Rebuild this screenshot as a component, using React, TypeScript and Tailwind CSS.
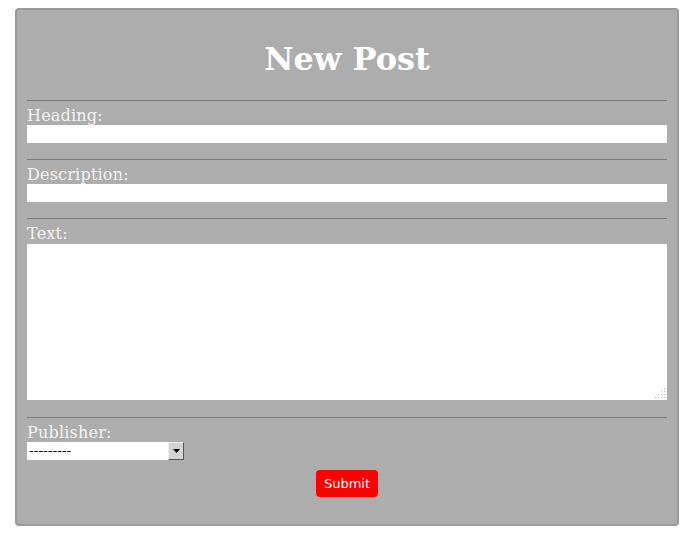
export default function App() {
  const fields = ["Heading:", "Description:"];

  return (
    <div className="min-h-[547px] bg-white pt-[8px] pl-[15px] pr-[18px]">
      <div className="w-[664px] h-[518px] rounded-[4px] border-2 border-[#9a9a9a] bg-[#adadad] px-[10px]">
        <h1 className="pt-[31px] pb-[23px] text-center text-[32px] leading-[36px] font-bold text-white [font-family:'DejaVu_Serif',serif]">
          New Post
        </h1>

        <form className="flex flex-col [font-family:'DejaVu_Serif',serif]">
          {fields.map((label) => (
            <div key={label} className="border-t border-[#7a7a7a] pb-[16px]">
              <label className="block h-[24px] pt-[5px] text-[16px] leading-[20px] tracking-[0.2px] text-[#f4f4f4]">
                {label}
              </label>
              <input type="text" className="block h-[18px] w-full border-0 bg-white outline-none" />
            </div>
          ))}

          <div className="border-t border-[#7a7a7a] pb-[17px]">
            <label className="block h-[25px] pt-[5px] text-[16px] leading-[20px] tracking-[0.2px] text-[#f4f4f4]">
              Text:
            </label>
            <div className="relative">
              <textarea className="block h-[156px] w-full resize-none border-0 bg-white outline-none" />
              <svg className="absolute bottom-[1px] right-[1px]" width="11" height="11" viewBox="0 0 11 11">
                <g fill="#b8b8b8">
                  <rect x="9" y="0" width="1" height="1" />
                  <rect x="6" y="3" width="1" height="1" />
                  <rect x="9" y="3" width="1" height="1" />
                  <rect x="3" y="6" width="1" height="1" />
                  <rect x="6" y="6" width="1" height="1" />
                  <rect x="9" y="6" width="1" height="1" />
                  <rect x="0" y="9" width="1" height="1" />
                  <rect x="3" y="9" width="1" height="1" />
                  <rect x="6" y="9" width="1" height="1" />
                  <rect x="9" y="9" width="1" height="1" />
                </g>
                <g fill="#e0e0e0">
                  <rect x="10" y="1" width="1" height="1" />
                  <rect x="7" y="4" width="1" height="1" />
                  <rect x="10" y="4" width="1" height="1" />
                  <rect x="4" y="7" width="1" height="1" />
                  <rect x="7" y="7" width="1" height="1" />
                  <rect x="10" y="7" width="1" height="1" />
                  <rect x="1" y="10" width="1" height="1" />
                  <rect x="4" y="10" width="1" height="1" />
                  <rect x="7" y="10" width="1" height="1" />
                  <rect x="10" y="10" width="1" height="1" />
                </g>
              </svg>
            </div>
          </div>

          <div className="border-t border-[#7a7a7a]">
            <label className="block h-[24px] pt-[5px] text-[16px] leading-[20px] tracking-[0.2px] text-[#f4f4f4]">
              Publisher:
            </label>
            <div className="flex h-[18px] w-[157px] items-center bg-white">
              <span className="flex-1 pl-[2px] text-[13px] leading-[18px] text-black [font-family:'DejaVu_Sans',sans-serif]">
                ---------
              </span>
              <span className="flex h-[18px] w-[16px] items-center justify-center border border-t-[#eee] border-l-[#eee] border-b-[#555] border-r-[#555] bg-[#d4d4d4]">
                <svg width="7" height="4" viewBox="0 0 7 4">
                  <path d="M0 0h7L3.5 4z" fill="#000" />
                </svg>
              </span>
            </div>
          </div>

          <div className="flex justify-center pt-[10px]">
            <button
              type="button"
              className="h-[27px] w-[62px] rounded-[4px] bg-[#ff0000] text-[13px] text-white [font-family:'DejaVu_Sans',sans-serif]"
            >
              Submit
            </button>
          </div>
        </form>
      </div>
    </div>
  );
}
